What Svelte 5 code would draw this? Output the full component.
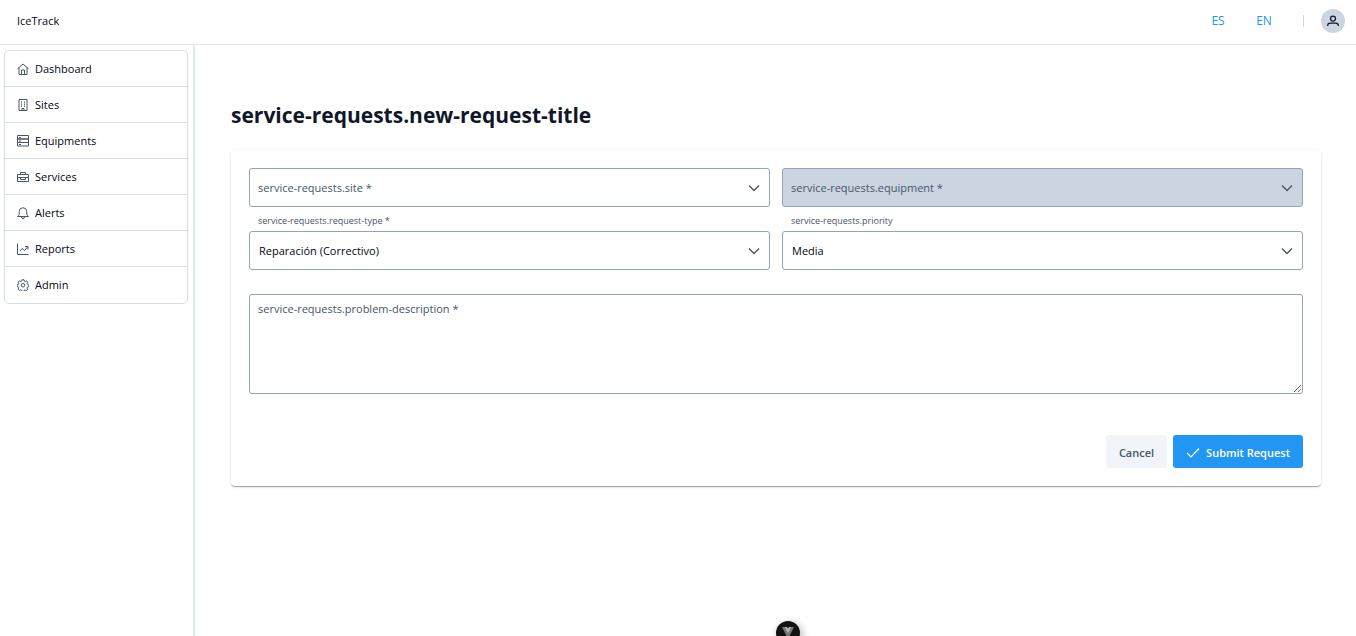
<script>
  const menu = [
    { label: 'Dashboard', icon: 'home' },
    { label: 'Sites', icon: 'building' },
    { label: 'Equipments', icon: 'server' },
    { label: 'Services', icon: 'briefcase' },
    { label: 'Alerts', icon: 'bell' },
    { label: 'Reports', icon: 'chart' },
    { label: 'Admin', icon: 'cog' }
  ];

  const fields = [
    { id: 'site', label: 'service-requests.site *', value: '', options: [''] },
    { id: 'equipment', label: 'service-requests.equipment *', value: '', options: [''], disabled: true },
    { id: 'type', label: 'service-requests.request-type *', value: 'Reparación (Correctivo)', options: ['Reparación (Correctivo)'] },
    { id: 'priority', label: 'service-requests.priority', value: 'Media', options: ['Media'] }
  ];

  let description = $state('');
</script>

{#snippet icon(name)}
  <svg class="icon" viewBox="0 0 24 24" aria-hidden="true">
    {#if name === 'home'}
      <path d="M1 11.500 12 2l11 9.500M4 9.500V23h16V9.500M9 23v-9h6v9" />
    {:else if name === 'building'}
      <path d="M4 1h16v22H4zM10 23v-4h4v4" />
      <path d="M8 6h2M14 6h2M8 10h2M14 10h2M8 14h2M14 14h2" stroke-width="2.500" />
    {:else if name === 'server'}
      <path d="M1 1h22v7H1zM1 8h22v7H1zM1 15h22v7H1zM4 5h4M4 12h4M4 19h4" />
    {:else if name === 'briefcase'}
      <path d="M1 7h22v14H1zM7 7V3h10v4M1 13h22M7 13v4h10v-4" />
    {:else if name === 'bell'}
      <path d="M1 19c2.500-1.500 3.500-3.500 3.500-7V9a7.500 7.500 0 0 1 15 0v3c0 3.500 1 5.500 3.500 7zM9 20a3 3 0 0 0 6 0" />
    {:else if name === 'chart'}
      <path d="M1 1v22h22M6 16l4-5 5 4 6-7M16 7h6v6" />
    {:else if name === 'cog'}
      <path d="M10 1.500h4l.8 3 1.800.8 2.700-1.500 2.400 2.800-1.500 2.600.6 1.600 2.700.9v3.600l-2.900.9-.7 1.700 1.500 2.700-2.800 2.600-2.600-1.500-1.700.7-.7 2.600h-3.600l-.9-2.800-1.700-.6-2.600 1.500-2.700-2.700 1.500-2.600-.7-1.800-2.700-.8v-3.500l2.800-.9.7-1.800-1.400-2.600L5.200 3.800l2.500 1.500 1.600-.7z" />
      <circle cx="12" cy="12.500" r="3.500" />
    {/if}
  </svg>
{/snippet}

<div class="page">
  <header class="topbar">
    <span class="brand">IceTrack</span>
    <div class="tools">
      <button class="lang" type="button">ES</button>
      <button class="lang" type="button">EN</button>
      <span class="divider"></span>
      <button class="avatar" type="button" aria-label="User">
        <svg viewBox="0 0 24 24" aria-hidden="true">
          <circle cx="12" cy="7" r="5" />
          <path d="M1.500 22v-1.500c0-3 2.500-4.500 5-4.500h11c2.500 0 5 1.500 5 4.500V22" />
        </svg>
      </button>
    </div>
  </header>

  <div class="body">
    <aside class="sidebar">
      <nav class="menu">
        {#each menu as item}
          <a href="#{item.icon}">{@render icon(item.icon)}<span>{item.label}</span></a>
        {/each}
      </nav>
    </aside>

    <main>
      <h1>service-requests.new-request-title</h1>
      <form class="card" onsubmit={(e) => e.preventDefault()}>
        <div class="grid">
          {#each fields as field}
            <div class="field" class:filled={field.value}>
              <select id={field.id} value={field.value} disabled={field.disabled}>
                {#each field.options as option}
                  <option value={option}>{option}</option>
                {/each}
              </select>
              <label for={field.id}>{field.label}</label>
              <svg class="chevron" viewBox="0 0 12 12" aria-hidden="true"><path d="M1 3.500 6 8.500l5-5" /></svg>
            </div>
          {/each}
        </div>

        <div class="field area" class:filled={description}>
          <textarea id="description" bind:value={description}></textarea>
          <label for="description">service-requests.problem-description *</label>
        </div>

        <div class="actions">
          <button class="cancel" type="button">Cancel</button>
          <button class="submit" type="submit">
            <svg viewBox="0 0 12 12" aria-hidden="true"><path d="M0 6 4 10 12 1.500" /></svg>
            <span>Submit Request</span>
          </button>
        </div>
      </form>
    </main>
  </div>

  <button class="devtools" type="button" aria-label="Toggle devtools">
    <svg viewBox="0 0 24 24" aria-hidden="true">
      <path d="M6 6h4l2 4 2-4h4l-6 12z" fill="#777" />
      <path d="M9 6h2l1 2 1-2h2l-3 6z" fill="#bbb" />
    </svg>
  </button>
</div>

<style>
  :global(body) {
    margin: 0;
    background: #fff;
  }

  .page {
    display: flex;
    flex-direction: column;
    min-height: 100vh;
    font-family: 'Segoe UI', 'Open Sans', 'Noto Sans', sans-serif;
    font-size: 11px;
    line-height: 18px;
    color: #020617;
  }

  .page * {
    box-sizing: border-box;
  }

  button,
  select,
  textarea {
    font: inherit;
    color: inherit;
    margin: 0;
  }

  button {
    border: 0;
    padding: 0;
    cursor: pointer;
  }

  svg {
    fill: none;
    flex: none;
  }

  .topbar {
    display: flex;
    align-items: center;
    justify-content: space-between;
    height: 45px;
    padding: 0 11px 2px 17px;
    border-bottom: 1px solid #e2e8f0;
  }

  .brand {
    font-weight: 500;
  }

  .tools {
    display: flex;
    align-items: center;
  }

  .lang {
    width: 46px;
    background: none;
    color: #2196f3;
    font-size: 12px;
    font-weight: 500;
  }

  .divider {
    width: 1px;
    height: 12px;
    margin: 0 17px 0 16px;
    background: #cbd5e1;
  }

  .avatar {
    display: grid;
    place-items: center;
    width: 24px;
    height: 24px;
    border-radius: 50%;
    background: #cbd5e1;
  }

  .avatar svg {
    width: 12px;
    height: 12px;
    stroke: #0f172a;
    stroke-width: 2.5;
  }

  .body {
    display: flex;
    flex: 1;
  }

  .sidebar {
    flex: none;
    width: 195px;
    padding: 5px 5px 0 4px;
    border-right: 2px solid #e2e8f0;
  }

  .menu {
    border: 1px solid #d5dde8;
    border-radius: 5px;
  }

  .menu a {
    display: flex;
    align-items: center;
    gap: 6px;
    height: 36px;
    padding: 0 12px;
    color: inherit;
    text-decoration: none;
  }

  .menu a:not(:last-child) {
    border-bottom: 1px solid #d5dde8;
  }

  .icon {
    width: 12px;
    height: 12px;
    stroke: #475569;
    stroke-width: 2;
    stroke-linejoin: round;
  }

  main {
    flex: 1;
    min-width: 0;
    padding: 54px 35px 36px 36px;
  }

  h1 {
    margin: 0 0 18px;
    font-size: 21px;
    line-height: 33px;
    font-weight: 700;
    color: #0f172a;
  }

  .card {
    padding: 18px;
    border-radius: 4px;
    box-shadow:
      0 2px 1px -1px rgba(0, 0, 0, 0.2),
      0 1px 1px rgba(0, 0, 0, 0.14),
      0 1px 3px rgba(0, 0, 0, 0.12);
  }

  .grid {
    display: grid;
    grid-template-columns: 1fr 1fr;
    gap: 24px 12px;
  }

  .field {
    position: relative;
  }

  select,
  textarea {
    display: block;
    width: 100%;
    border: 1px solid #94a3b8;
    border-radius: 3px;
    background: #fff;
    opacity: 1;
  }

  select {
    appearance: none;
    height: 39px;
    padding: 0 36px 0 9px;
  }

  select:disabled {
    background: #cbd5e1;
  }

  textarea {
    height: 100px;
    padding: 9px;
    resize: vertical;
  }

  label {
    position: absolute;
    top: 11px;
    left: 9px;
    color: #475569;
    font-weight: 500;
    pointer-events: none;
  }

  .area label {
    top: 6px;
  }

  .filled label {
    top: -19px;
    font-size: 9px;
    font-weight: 400;
  }

  .chevron {
    position: absolute;
    top: 14px;
    right: 10px;
    width: 12px;
    height: 12px;
    stroke: #475569;
    stroke-width: 1.3;
    pointer-events: none;
  }

  .area {
    margin-top: 24px;
  }

  .actions {
    display: flex;
    justify-content: flex-end;
    gap: 6px;
    margin-top: 41px;
  }

  .actions button {
    display: flex;
    align-items: center;
    gap: 6px;
    height: 33px;
    padding: 2px 13px 0;
    border-radius: 3px;
    font-weight: 600;
  }

  .cancel {
    background: #f1f5f9;
    color: #475569;
  }

  .submit {
    background: #2196f3;
    color: #fff;
  }

  .submit svg {
    width: 14px;
    height: 12px;
    stroke: #fff;
    stroke-width: 1.2;
  }

  .devtools {
    position: fixed;
    left: calc(58% - 10px);
    bottom: -9px;
    width: 24px;
    height: 24px;
    border-radius: 50%;
    background: #111;
    box-shadow: 2px 2px 8px rgba(0, 0, 0, 0.3);
  }
</style>
